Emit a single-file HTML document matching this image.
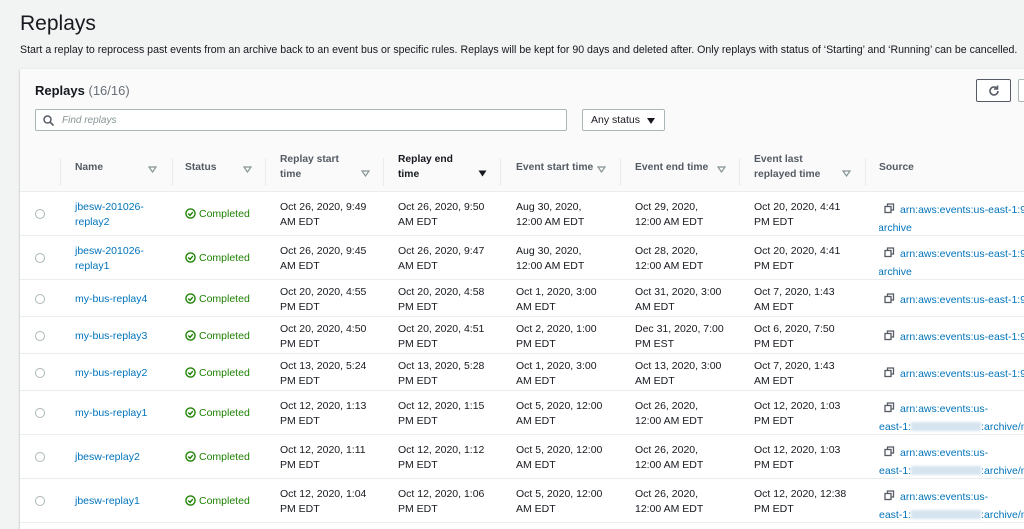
<!DOCTYPE html>
<html><head><style>
*{margin:0;padding:0;box-sizing:border-box}
body{width:1024px;height:521px;overflow:hidden;background:#f2f3f3;font-family:"Liberation Sans",sans-serif;color:#16191f;position:relative}
h1{position:absolute;left:20px;top:12px;font-size:21px;font-weight:normal}
.desc{position:absolute;left:20px;top:44px;font-size:10.6px}
.card{position:absolute;left:20px;top:69px;width:1010px;height:460px;background:#fff;box-shadow:0 1px 2px rgba(0,0,0,.3)}
.hd{position:absolute;left:0;top:0;width:100%;height:123px;background:#fafafa;border-bottom:1px solid #eaeded}
.title{position:absolute;left:15px;top:14px;font-size:13px;font-weight:bold}
.title span{font-weight:normal;color:#687078}
.search{position:absolute;left:15px;top:40px;width:532px;height:22px;border:1px solid #aab7b8;background:#fff;border-radius:2px;font-size:10px;font-style:italic;color:#879596;padding:5px 0 0 26px}
.search svg{position:absolute;left:7px;top:5px}
.sel{position:absolute;left:562px;top:40px;width:83px;height:22px;border:1px solid #aab7b8;background:#fff;border-radius:2px;font-size:10.5px;padding:4px 0 0 8px}
.sel:after{content:"";position:absolute;right:9px;top:8px;border:4px solid transparent;border-top:6px solid #16191f}
.btn{position:absolute;left:956px;top:10px;width:35px;height:23px;border:1px solid #545b64;border-radius:2px;background:#fff}
.btn svg{position:absolute;left:11px;top:5px}
.btn2{position:absolute;left:998px;top:10px;width:20px;height:23px;border:1px solid #aab7b8;border-radius:2px;background:#fff}
.th{position:absolute;top:83px;font-size:10.3px;font-weight:bold;color:#545b64;line-height:15px}
.sep{position:absolute;top:89px;width:1px;height:28px;background:#eaeded}
.tri{position:absolute;top:97px;width:9px;height:7px}
.row{position:absolute;left:0;width:100%;border-bottom:1px solid #eaeded}
.c{position:absolute;font-size:10.5px;line-height:15px}
.radio{position:absolute;left:15px;width:10px;height:10px;border:1px solid #aab7b8;border-radius:50%}
a{color:#0073bb;text-decoration:none}
.ok{color:#1d8102}
.ok svg{vertical-align:-2px;margin-right:3px}
.blur{display:inline-block;width:70px;height:9px;background:#d6e4ef;vertical-align:-1px;filter:blur(1px)}
</style></head><body>
<h1>Replays</h1>
<div class="desc">Start a replay to reprocess past events from an archive back to an event bus or specific rules. Replays will be kept for 90 days and deleted after. Only replays with status of ‘Starting’ and ‘Running’ can be cancelled.</div>
<div class="card">
<div class="hd">
<div class="title">Replays <span>(16/16)</span></div>
<div class="btn"><svg width="12" height="12" viewBox="0 0 12 12"><path d="M10 6a4 4 0 1 1-1.2-2.9" fill="none" stroke="#545b64" stroke-width="1.6"/><path d="M9.5 0.5v3.5h-3.5" fill="none" stroke="#545b64" stroke-width="1.6"/></svg></div>
<div class="btn2"></div>
<div class="search"><svg width="11" height="11" viewBox="0 0 11 11"><circle cx="4.5" cy="4.5" r="3.5" fill="none" stroke="#545b64" stroke-width="1.5"/><path d="M7 7l3.5 3.5" stroke="#545b64" stroke-width="1.6"/></svg>Find replays</div>
<div class="sel">Any status</div>
<div class="sep" style="left:40px"></div>
<div class="th" style="left:55px;top:91px">Name</div><svg class="tri" style="left:128px" viewBox="0 0 9 7"><path d="M1 1h7L4.5 6z" fill="none" stroke="#879596" stroke-width="1.2"/></svg>
<div class="sep" style="left:152px"></div>
<div class="th" style="left:165px;top:91px">Status</div><svg class="tri" style="left:223px" viewBox="0 0 9 7"><path d="M1 1h7L4.5 6z" fill="none" stroke="#879596" stroke-width="1.2"/></svg>
<div class="sep" style="left:245px"></div>
<div class="th" style="left:260px">Replay start<br>time</div><svg class="tri" style="left:341px;top:101px" viewBox="0 0 9 7"><path d="M1 1h7L4.5 6z" fill="none" stroke="#879596" stroke-width="1.2"/></svg>
<div class="sep" style="left:363px"></div>
<div class="th" style="left:378px;color:#16191f">Replay end<br>time</div><svg class="tri" style="left:458px;top:101px" viewBox="0 0 9 7"><path d="M0.5 0.5h8L4.5 6.5z" fill="#16191f"/></svg>
<div class="sep" style="left:480px"></div>
<div class="th" style="left:496px;top:91px">Event start time</div><svg class="tri" style="left:577px" viewBox="0 0 9 7"><path d="M1 1h7L4.5 6z" fill="none" stroke="#879596" stroke-width="1.2"/></svg>
<div class="sep" style="left:600px"></div>
<div class="th" style="left:615px;top:91px">Event end time</div><svg class="tri" style="left:697px" viewBox="0 0 9 7"><path d="M1 1h7L4.5 6z" fill="none" stroke="#879596" stroke-width="1.2"/></svg>
<div class="sep" style="left:719px"></div>
<div class="th" style="left:734px">Event last<br>replayed time</div><svg class="tri" style="left:822px;top:101px" viewBox="0 0 9 7"><path d="M1 1h7L4.5 6z" fill="none" stroke="#879596" stroke-width="1.2"/></svg>
<div class="sep" style="left:845px"></div>
<div class="th" style="left:859px;top:91px">Source</div>
</div>
</div>
<div id="rows"></div>
<script>
var R=[
["jbesw-201026-<br>replay2","Oct 26, 2020, 9:49<br>AM EDT","Oct 26, 2020, 9:50<br>AM EDT","Aug 30, 2020,<br>12:00 AM EDT","Oct 29, 2020,<br>12:00 AM EDT","Oct 20, 2020, 4:41<br>PM EDT",1,44],
["jbesw-201026-<br>replay1","Oct 26, 2020, 9:45<br>AM EDT","Oct 26, 2020, 9:47<br>AM EDT","Aug 30, 2020,<br>12:00 AM EDT","Oct 28, 2020,<br>12:00 AM EDT","Oct 20, 2020, 4:41<br>PM EDT",1,44],
["my-bus-replay4","Oct 20, 2020, 4:55<br>PM EDT","Oct 20, 2020, 4:58<br>PM EDT","Oct 1, 2020, 3:00<br>AM EDT","Oct 31, 2020, 3:00<br>AM EDT","Oct 7, 2020, 1:43<br>AM EDT",0,37],
["my-bus-replay3","Oct 20, 2020, 4:50<br>PM EDT","Oct 20, 2020, 4:51<br>PM EDT","Oct 2, 2020, 1:00<br>PM EDT","Dec 31, 2020, 7:00<br>PM EST","Oct 6, 2020, 7:50<br>PM EDT",0,37],
["my-bus-replay2","Oct 13, 2020, 5:24<br>PM EDT","Oct 13, 2020, 5:28<br>PM EDT","Oct 1, 2020, 3:00<br>AM EDT","Oct 13, 2020, 3:00<br>AM EDT","Oct 7, 2020, 1:43<br>AM EDT",0,37],
["my-bus-replay1","Oct 12, 2020, 1:13<br>PM EDT","Oct 12, 2020, 1:15<br>PM EDT","Oct 5, 2020, 12:00<br>AM EDT","Oct 26, 2020,<br>12:00 AM EDT","Oct 12, 2020, 1:03<br>PM EDT",2,44],
["jbesw-replay2","Oct 12, 2020, 1:11<br>PM EDT","Oct 12, 2020, 1:12<br>PM EDT","Oct 5, 2020, 12:00<br>AM EDT","Oct 26, 2020,<br>12:00 AM EDT","Oct 12, 2020, 1:03<br>PM EDT",2,44],
["jbesw-replay1","Oct 12, 2020, 1:04<br>PM EDT","Oct 12, 2020, 1:06<br>PM EDT","Oct 5, 2020, 12:00<br>AM EDT","Oct 26, 2020,<br>12:00 AM EDT","Oct 12, 2020, 12:38<br>PM EDT",2,44]];
var y=192,h='';
var ic='<svg width="11" height="11" viewBox="0 0 11 11" style="vertical-align:-1px;margin-right:5px"><rect x="1" y="3.5" width="6" height="6" fill="none" stroke="#545b64" stroke-width="1.3"/><path d="M3.5 3.5V1h6v6H7" fill="none" stroke="#545b64" stroke-width="1.3"/></svg>';
var ck='<svg width="11" height="11" viewBox="0 0 12 12"><circle cx="6" cy="6" r="5" fill="none" stroke="#1d8102" stroke-width="1.5"/><path d="M3.5 6l2 2 3-3.5" fill="none" stroke="#1d8102" stroke-width="1.5"/></svg>';
R.forEach(function(r){var H=r[7],t=y+H/2-14,t1=y+H/2-7;
h+='<div class="row" style="top:'+y+'px;height:'+H+'px;left:20px;width:1010px;background:#fff"></div>';
h+='<div class="radio" style="left:35px;top:'+(y+H/2-5)+'px"></div>';
var nt=r[0].indexOf('<br>')>0?t:t1;
h+='<div class="c" style="left:75px;top:'+nt+'px"><a>'+r[0]+'</a></div>';
h+='<div class="c ok" style="left:185px;top:'+t1+'px">'+ck+'Completed</div>';
[280,398,516,635,754].forEach(function(x,i){h+='<div class="c" style="left:'+x+'px;top:'+t+'px">'+r[i+1]+'</div>'});
var s;if(r[6]==1)s='<div style="padding-left:5px">'+ic+'<a>arn:aws:events:us-east-1:93</a></div><a style="margin-left:-1px">archive</a>';
else if(r[6]==0)s='<div style="padding-left:5px">'+ic+'<a>arn:aws:events:us-east-1:93</a></div>';
else s='<div style="padding-left:5px">'+ic+'<a>arn:aws:events:us-</a></div><a>east-1:<span class="blur"></span>:archive/m</a>';
h+='<div class="c" style="left:879px;top:'+(r[6]==0?t1:t)+'px;width:145px;overflow:hidden;white-space:nowrap;line-height:18px;margin-top:'+(r[6]==0?-1:1)+'px">'+s+'</div>';
y+=H;});
document.getElementById('rows').innerHTML=h;
</script>
</body></html>
